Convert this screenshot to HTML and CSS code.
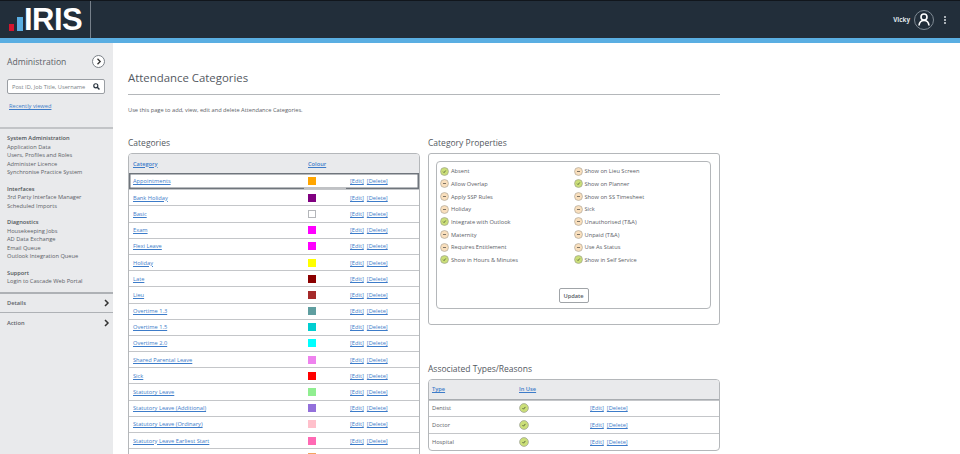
FILE: index.html
```html
<!DOCTYPE html>
<html lang="en">
<head>
<meta charset="utf-8">
<title>Attendance Categories</title>
<link rel="stylesheet" href="styles.css">
</head>
<body>
<svg class="defs" width="0" height="0" aria-hidden="true">
  <symbol id="yes" viewBox="0 0 10 10"><circle cx="5" cy="5" r="4.400" fill="#cbdf78" stroke="#9a9e90" stroke-width=".7"/><path d="M3.500 5.200l1 1 1.900-2.300" fill="none" stroke="#3f4a30" stroke-width=".8"/></symbol>
  <symbol id="no" viewBox="0 0 10 10"><circle cx="5" cy="5" r="4.400" fill="#f9dfbd" stroke="#a8a296" stroke-width=".7"/><path d="M3.300 5h3.400" fill="none" stroke="#4c4a44" stroke-width=".8"/></symbol>
</svg>
<header class="topbar">
  <div class="brand">
    <svg class="logo-bars" width="14" height="14" viewBox="0 0 14 14"><rect x="0" y="7" width="5" height="7" fill="#d5152e"/><rect x="8" y="0" width="6" height="14" fill="#5aaee2"/></svg>
    <span class="logo-text">IRIS</span>
  </div>
  <div class="user">
    <span class="user-name">Vicky</span>
    <span class="avatar"><svg width="12" height="13" viewBox="0 0 12 13"><circle cx="6" cy="4" r="3" fill="none" stroke="#fff" stroke-width="1.6"/><path d="M1 12.500c.3-3 2-5 5-5s4.700 2 5 5" fill="none" stroke="#fff" stroke-width="1.6"/></svg></span>
    <span class="kebab"><i></i><i></i><i></i></span>
  </div>
</header>
<div class="accent"></div>
<div class="layout">
  <aside class="sidebar">
    <div class="side-head">
      <span class="side-title">Administration</span>
      <span class="round-btn"><svg width="6" height="7" viewBox="0 0 6 7"><path d="M1.500 .8L4.200 3.500 1.500 6.200" fill="none" stroke="#333" stroke-width="1.300"/></svg></span>
    </div>
    <div class="search">
      <span>Post ID, Job Title, Username</span>
      <svg width="7" height="7" viewBox="0 0 9 9"><circle cx="3.600" cy="3.600" r="2.600" fill="none" stroke="#27323d" stroke-width="1.500"/><path d="M5.500 5.500L8.300 8.300" stroke="#27323d" stroke-width="1.800"/></svg>
    </div>
    <a class="recent" href="#">Recently viewed</a>
    <nav class="side-nav">
      <div class="nav-group"><b>System Administration</b><a>Application Data</a><a>Users, Profiles and Roles</a><a>Administer Licence</a><a>Synchronise Practice System</a></div>
      <div class="nav-group"><b>Interfaces</b><a>3rd Party Interface Manager</a><a>Scheduled Imports</a></div>
      <div class="nav-group"><b>Diagnostics</b><a>Housekeeping Jobs</a><a>AD Data Exchange</a><a>Email Queue</a><a>Outlook Integration Queue</a></div>
      <div class="nav-group"><b>Support</b><a>Login to Cascade Web Portal</a></div>
    </nav>
    <div class="fold first"><span>Details</span><svg width="6" height="8" viewBox="0 0 6 8"><path d="M1 1l3 3-3 3" fill="none" stroke="#333" stroke-width="1.500"/></svg></div>
    <div class="fold"><span>Action</span><svg width="6" height="8" viewBox="0 0 6 8"><path d="M1 1l3 3-3 3" fill="none" stroke="#333" stroke-width="1.500"/></svg></div>
  </aside>
  <main class="main">
    <h1>Attendance Categories</h1>
    <p class="intro">Use this page to add, view, edit and delete Attendance Categories.</p>
    <div class="columns">
      <section class="col-left">
        <h2>Categories</h2>
        <div class="table cat-table">
          <div class="row head"><a>Category</a><a>Colour</a><span></span></div>
          <div class="row selected"><a>Appointments</a><i class="swatch c-orange"></i><span class="acts"><a>[Edit]</a><a>[Delete]</a></span></div>
          <div class="row"><a>Bank Holiday</a><i class="swatch c-purple"></i><span class="acts"><a>[Edit]</a><a>[Delete]</a></span></div>
          <div class="row"><a>Basic</a><i class="swatch c-white"></i><span class="acts"><a>[Edit]</a><a>[Delete]</a></span></div>
          <div class="row"><a>Exam</a><i class="swatch c-magenta"></i><span class="acts"><a>[Edit]</a><a>[Delete]</a></span></div>
          <div class="row"><a>Flexi Leave</a><i class="swatch c-magenta"></i><span class="acts"><a>[Edit]</a><a>[Delete]</a></span></div>
          <div class="row"><a>Holiday</a><i class="swatch c-yellow"></i><span class="acts"><a>[Edit]</a><a>[Delete]</a></span></div>
          <div class="row"><a>Late</a><i class="swatch c-maroon"></i><span class="acts"><a>[Edit]</a><a>[Delete]</a></span></div>
          <div class="row"><a>Lieu</a><i class="swatch c-brown"></i><span class="acts"><a>[Edit]</a><a>[Delete]</a></span></div>
          <div class="row"><a>Overtime 1.3</a><i class="swatch c-teal"></i><span class="acts"><a>[Edit]</a><a>[Delete]</a></span></div>
          <div class="row"><a>Overtime 1.5</a><i class="swatch c-turq"></i><span class="acts"><a>[Edit]</a><a>[Delete]</a></span></div>
          <div class="row"><a>Overtime 2.0</a><i class="swatch c-cyan"></i><span class="acts"><a>[Edit]</a><a>[Delete]</a></span></div>
          <div class="row"><a>Shared Parental Leave</a><i class="swatch c-violet"></i><span class="acts"><a>[Edit]</a><a>[Delete]</a></span></div>
          <div class="row"><a>Sick</a><i class="swatch c-red"></i><span class="acts"><a>[Edit]</a><a>[Delete]</a></span></div>
          <div class="row"><a>Statutory Leave</a><i class="swatch c-green"></i><span class="acts"><a>[Edit]</a><a>[Delete]</a></span></div>
          <div class="row"><a>Statutory Leave (Additional)</a><i class="swatch c-mpurple"></i><span class="acts"><a>[Edit]</a><a>[Delete]</a></span></div>
          <div class="row"><a>Statutory Leave (Ordinary)</a><i class="swatch c-pink"></i><span class="acts"><a>[Edit]</a><a>[Delete]</a></span></div>
          <div class="row"><a>Statutory Leave Earliest Start</a><i class="swatch c-hotpink"></i><span class="acts"><a>[Edit]</a><a>[Delete]</a></span></div>
          <div class="row"><a></a><i class="swatch c-coral"></i><span class="acts"></span></div>
        </div>
      </section>
      <section class="col-right">
        <h2>Category Properties</h2>
        <div class="props-outer">
          <div class="props-inner">
            <ul class="props">
              <li><svg><use href="#yes"/></svg>Absent</li>
              <li><svg><use href="#no"/></svg>Show on Lieu Screen</li>
              <li><svg><use href="#no"/></svg>Allow Overlap</li>
              <li><svg><use href="#yes"/></svg>Show on Planner</li>
              <li><svg><use href="#no"/></svg>Apply SSP Rules</li>
              <li><svg><use href="#no"/></svg>Show on SS Timesheet</li>
              <li><svg><use href="#no"/></svg>Holiday</li>
              <li><svg><use href="#no"/></svg>Sick</li>
              <li><svg><use href="#yes"/></svg>Integrate with Outlook</li>
              <li><svg><use href="#no"/></svg>Unauthorised (T&amp;A)</li>
              <li><svg><use href="#no"/></svg>Maternity</li>
              <li><svg><use href="#no"/></svg>Unpaid (T&amp;A)</li>
              <li><svg><use href="#no"/></svg>Requires Entitlement</li>
              <li><svg><use href="#no"/></svg>Use As Status</li>
              <li><svg><use href="#yes"/></svg>Show in Hours &amp; Minutes</li>
              <li><svg><use href="#yes"/></svg>Show in Self Service</li>
            </ul>
            <div class="update-wrap"><button class="update" type="button">Update</button></div>
          </div>
        </div>
        <h2 class="assoc-title">Associated Types/Reasons</h2>
        <div class="table type-table">
          <div class="row head"><a>Type</a><a>In Use</a><span></span></div>
          <div class="row"><span>Dentist</span><svg class="tick"><use href="#yes"/></svg><span class="acts"><a>[Edit]</a><a>[Delete]</a></span></div>
          <div class="row"><span>Doctor</span><svg class="tick"><use href="#yes"/></svg><span class="acts"><a>[Edit]</a><a>[Delete]</a></span></div>
          <div class="row"><span>Hospital</span><svg class="tick"><use href="#yes"/></svg><span class="acts"><a>[Edit]</a><a>[Delete]</a></span></div>
        </div>
      </section>
    </div>
  </main>
</div>
</body>
</html>
```

FILE: styles.css
```css
* { box-sizing: border-box; }
html, body { margin: 0; height: 454px; overflow: hidden; }
body { font-family: "Open Sans", "Liberation Sans", sans-serif; font-size: 5.700px; color: #5c6167; background: #fff; }
.defs { position: absolute; }

.topbar { height: 38px; background: #222e3a; border-top: 1px solid #11161c; display: flex; justify-content: space-between; align-items: center; }
.brand { width: 91px; height: 37px; border-right: 1px solid #77808a; display: flex; align-items: center; padding-left: 9px; }
.logo-bars { margin-top: 8px; flex: none; }
.logo-text { font-family: "Liberation Sans", sans-serif; font-weight: 700; font-size: 31px; line-height: 37px; color: #fff; margin-left: 1px; letter-spacing: -.5px; }
.user { display: flex; align-items: center; padding-right: 14px; }
.user-name { color: #dfe3e7; font-weight: 700; font-size: 6.300px; margin-right: 4px; }
.avatar { width: 20px; height: 20px; border: 1px solid #7f8a94; border-radius: 50%; display: flex; align-items: center; justify-content: center; margin-right: 10px; }
.kebab { display: flex; flex-direction: column; gap: 1px; }
.kebab i { width: 2px; height: 2px; background: #a9b0b6; }
.accent { height: 5px; background: #5aaee2; }

.layout { display: flex; height: 411px; }
.sidebar { width: 113px; flex: none; background: #e9eaec; }
.side-head { display: flex; justify-content: space-between; align-items: center; padding: 11px 8px 0 7px; height: 26px; }
.side-title { font-size: 8.600px; color: #5c6167; }
.round-btn { width: 13px; height: 13px; border: 1px solid #7a8087; border-radius: 50%; background: #fff; display: flex; align-items: center; justify-content: center; }
.search { margin: 10px 8px 0 7px; height: 15px; background: #fff; border: 1px solid #9a9ea3; border-radius: 2px; display: flex; align-items: center; justify-content: space-between; padding: 0 4px 0 4px; color: #7a7f85; }
.search span { white-space: nowrap; }
.recent { display: block; margin: 8px 0 0 9px; height: 25px; line-height: 9px; color: #3d7cc9; text-decoration: underline; }
.side-nav { border-top: 2px solid #c2c4c7; padding: 5px 0 0 7px; height: 165px; }
.nav-group { margin-bottom: 7.600px; }
.nav-group b, .nav-group a { display: block; line-height: 8.600px; white-space: nowrap; }
.nav-group b { font-weight: 600; color: #4f5459; }
.fold { height: 20px; border-top: 1px solid #aeb1b5; display: flex; align-items: center; justify-content: space-between; padding: 0 3px 0 7px; font-weight: 600; }
.fold.first { border-top-width: 2px; }

.main { flex: 1; padding: 0 0 0 15px; min-width: 0; }
h1 { margin: 0; width: 592px; height: 52px; padding-top: 25px; font-size: 11.400px; line-height: 19px; font-weight: 400; color: #54595f; border-bottom: 1px solid #b4b7ba; }
.intro { margin: 11px 0 0; line-height: 9px; }
.columns { display: flex; gap: 8px; margin-top: 21px; }
.col-left, .col-right { width: 292px; flex: none; }
h2 { margin: 0; height: 17px; font-size: 8.500px; line-height: 13px; font-weight: 400; color: #54595f; }

.table { border: 1px solid #b4b7ba; border-radius: 4px 4px 0 0; }
.type-table { border-radius: 4px; }
.row { display: grid; align-items: center; border-top: 1px solid #c4c6c9; position: relative; }
.cat-table .row { grid-template-columns: 175px 42px 1fr; height: 16.200px; padding-left: 4px; }
.type-table .row { grid-template-columns: 87px 71px 1fr; height: 16.700px; padding-left: 3px; }
.row.head { background: #e9eaec; border-top: 0; border-bottom: 1px solid #a9adb1; border-radius: 3px 3px 0 0; font-weight: 600; }
.cat-table .row.head { height: 20px; }
.type-table .row.head { height: 19.500px; }
.row.selected { border: 1px solid #6f757c; margin-top: -1px; padding-left: 3px; box-shadow: inset 0 0 0 .5px #6f757c; }
.row.selected::after { content: ""; position: absolute; left: 174px; top: 13px; width: 42px; height: 2px; background: #c0c2c5; }
.row a { color: #3d7cc9; text-decoration: underline; white-space: nowrap; }
.acts { display: flex; gap: 3px; }
.swatch { display: block; width: 8px; height: 8px; }
.c-orange { background: #ffa500; }
.c-purple { background: #800080; }
.c-white { background: #fff; border: 1px solid #b4b6ba; }
.c-magenta { background: #ff00ff; }
.c-yellow { background: #ffff00; }
.c-maroon { background: #8b0000; }
.c-brown { background: #a52a2a; }
.c-teal { background: #5f9ea0; }
.c-turq { background: #00ced1; }
.c-cyan { background: #00ffff; }
.c-violet { background: #ee82ee; }
.c-red { background: #ff0000; }
.c-green { background: #90ee90; }
.c-mpurple { background: #9370db; }
.c-pink { background: #ffc0cb; }
.c-hotpink { background: #ff69b4; }
.c-coral { background: #f4a460; }
.tick { width: 10px; height: 10px; }

.props-outer { height: 172px; border: 1px solid #b4b7ba; border-radius: 3px; padding: 7px 8px 0 7px; }
.props-inner { height: 148px; border: 1px solid #b4b7ba; border-radius: 4px; padding: 3px 3px 0 3px; }
.props { list-style: none; margin: 0; padding: 0; display: grid; grid-template-columns: 133.500px 1fr; grid-auto-rows: 12.670px; height: 123px; }
.props li { display: flex; align-items: center; gap: 2px; white-space: nowrap; }
.props svg { width: 9px; height: 9px; flex: none; }
.update-wrap { display: flex; justify-content: center; }
.update { width: 30px; height: 15px; padding: 0; background: #fff; border: 1px solid #a0a4a8; border-radius: 2px; font: 600 5.700px "Open Sans", sans-serif; color: #54595f; }
.assoc-title { margin-top: 37px; }
```
